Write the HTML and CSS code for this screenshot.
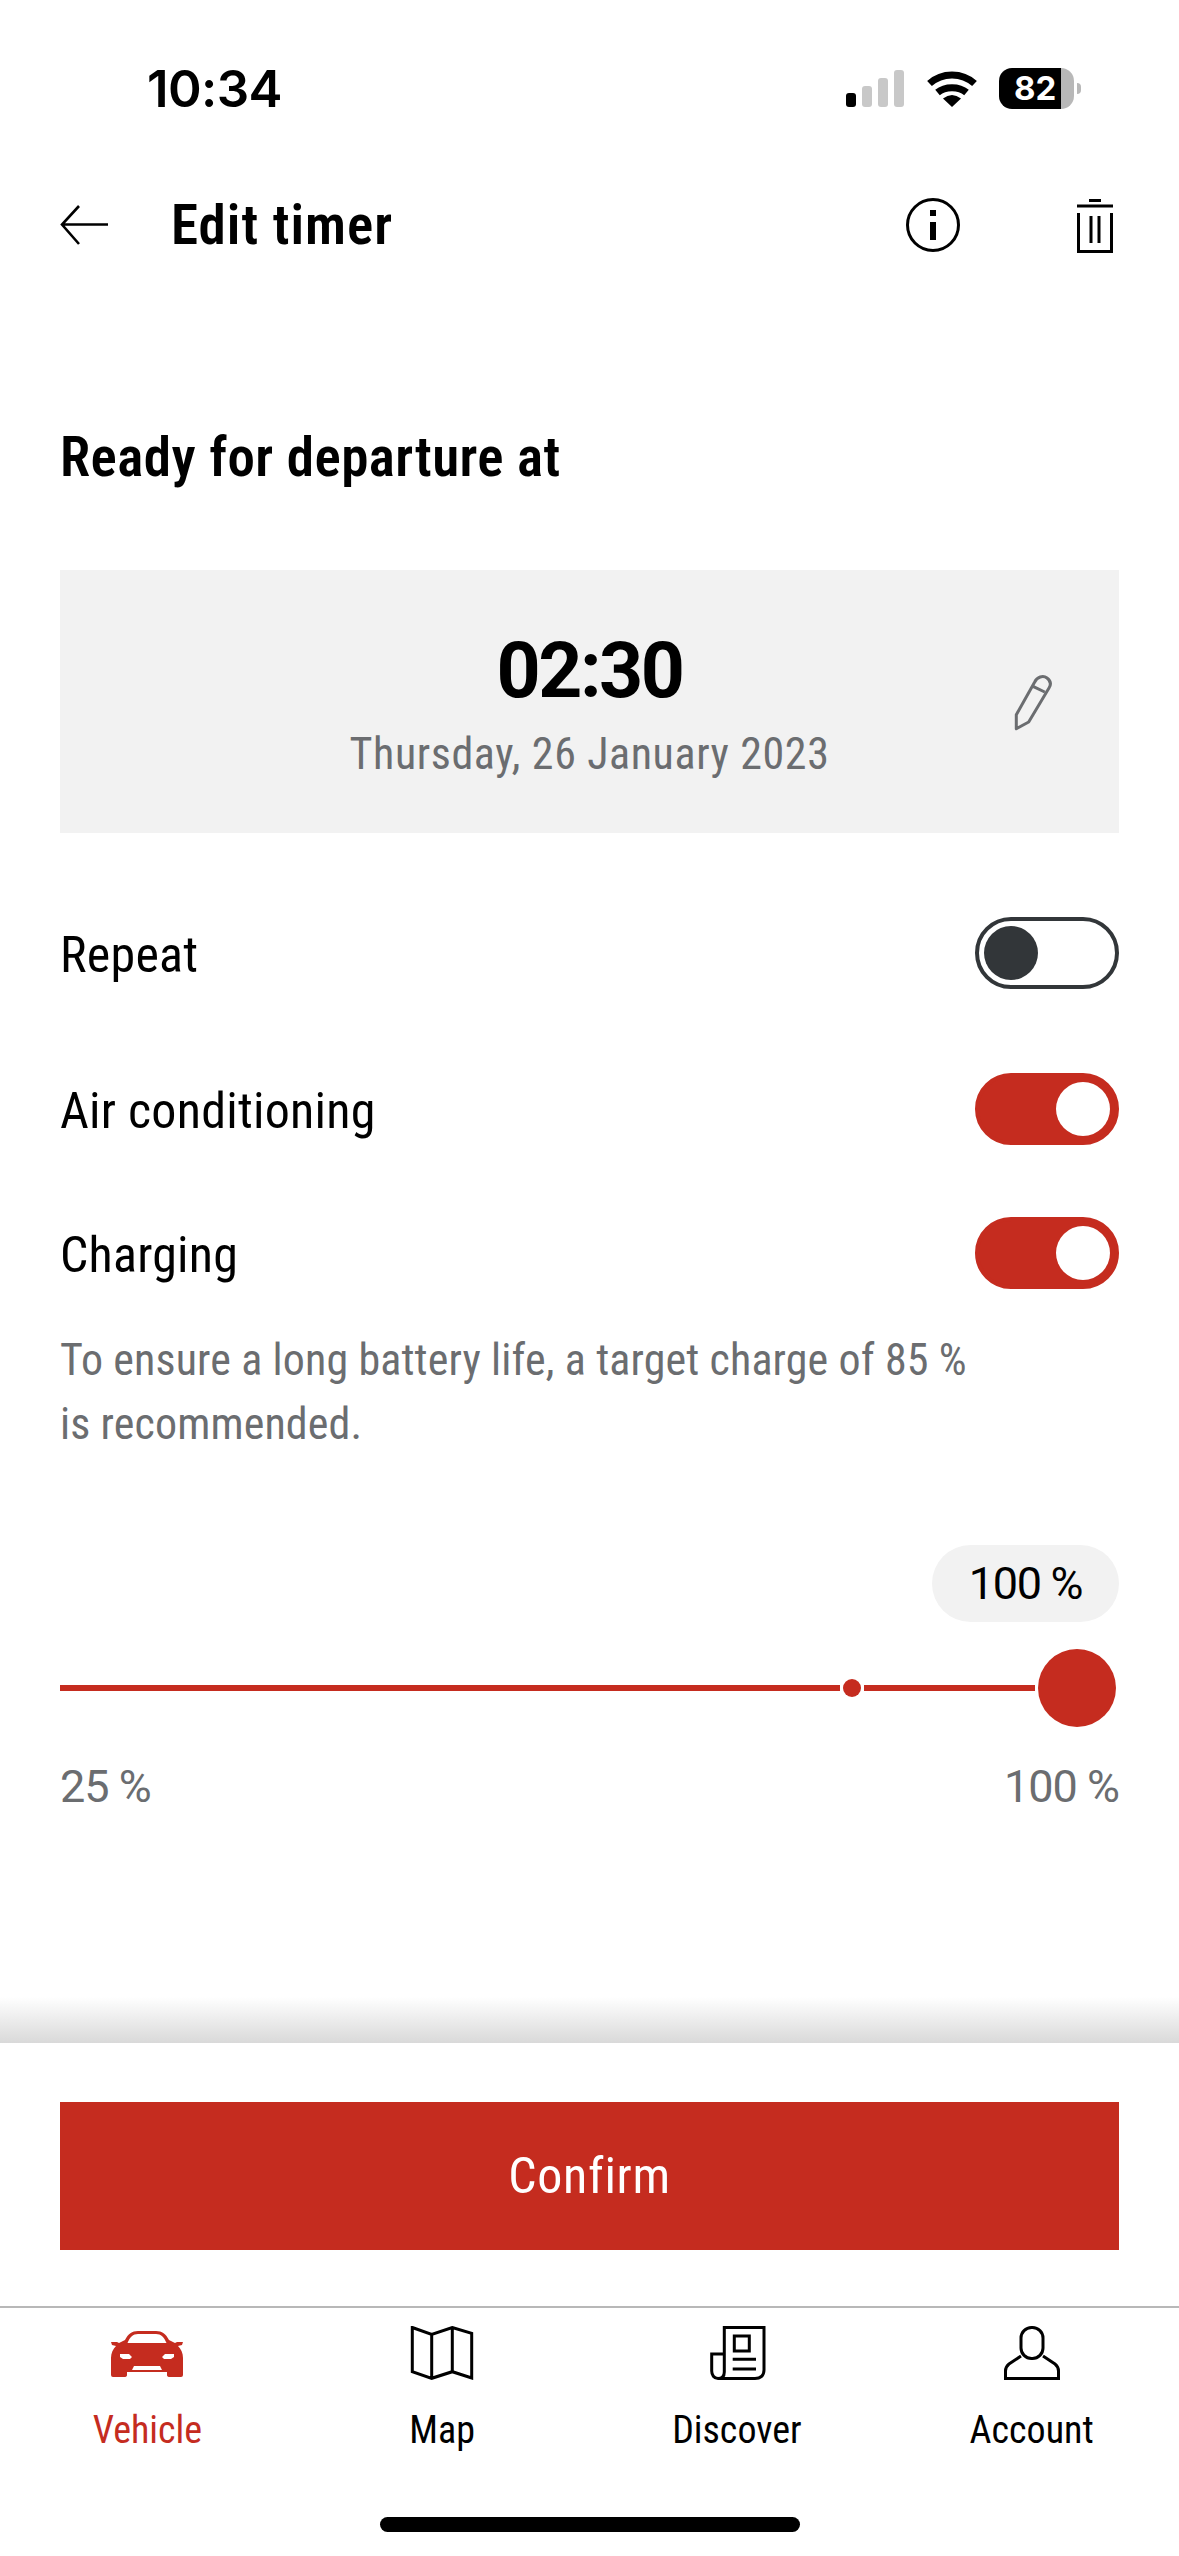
FILE: index.html
```html
<!DOCTYPE html>
<html lang="en">
<head>
  <meta charset="UTF-8">
  <title>Edit timer</title>
  <link rel="stylesheet" href="styles.css">
</head>
<body>
  <div class="phone">
    <div class="status">
      <span class="clock">10:34</span>
      <div class="status-icons">
        <svg class="signal" width="58" height="37" viewBox="0 0 58 37">
          <rect x="0" y="23" width="10" height="14" rx="3" fill="#000"/>
          <rect x="16" y="16" width="10" height="21" rx="3" fill="#c8c8c8"/>
          <rect x="32" y="8" width="10" height="29" rx="3" fill="#c8c8c8"/>
          <rect x="48" y="0" width="10" height="37" rx="3" fill="#c8c8c8"/>
        </svg>
        <svg class="wifi" width="50" height="37" viewBox="0 0 50 37">
          <path d="M2.5 13.5C15 2 35 2 47.5 13.5" fill="none" stroke="#000" stroke-width="7"/>
          <path d="M10.5 22.5C18 16 32 16 39.5 22.5" fill="none" stroke="#000" stroke-width="7"/>
          <path d="M25 37L16 28.5Q25 21.5 34 28.5Z" fill="#000"/>
        </svg>
        <div class="battery"><span>82</span></div>
        <div class="battery-nub"></div>
      </div>
    </div>

    <div class="topbar">
      <svg class="back" width="48" height="40" viewBox="0 0 48 40">
        <path d="M48 19.5H2M19 1L2 19.5L19 39" fill="none" stroke="#000" stroke-width="2.6"/>
      </svg>
      <span class="topbar-title">Edit timer</span>
      <svg class="info" width="54" height="54" viewBox="0 0 54 54">
        <circle cx="27" cy="27" r="25.5" fill="none" stroke="#000" stroke-width="3"/>
        <rect x="24" y="12" width="6" height="6" fill="#000"/>
        <rect x="24" y="24" width="6" height="18" fill="#000"/>
      </svg>
      <svg class="trash" width="36" height="56" viewBox="0 0 36 56">
        <path d="M12 3.5H24M0 9H36M1.5 16V54.500H34.500V16M14 19V46M22 19V46" fill="none" stroke="#000" stroke-width="3"/>
      </svg>
    </div>

    <div class="content">
      <h1 class="heading">Ready for departure at</h1>

      <div class="time-card">
        <div class="time-text">
          <div class="time">02:30</div>
          <div class="date">Thursday, 26 January 2023</div>
        </div>
        <svg class="pencil" width="40" height="58" viewBox="0 0 40 58">
          <path d="M3.300 55.700V41.700L21.700 9C24 4 30 2 34 5C38 8 38.500 11 36 15L15.700 49ZM20 13.300L31.700 19" fill="none" stroke="#6b6d70" stroke-width="3" stroke-linejoin="round"/>
        </svg>
      </div>

      <div class="row row-repeat">
        <span>Repeat</span>
        <div class="toggle"><div class="knob"></div></div>
      </div>
      <div class="row row-air">
        <span>Air conditioning</span>
        <div class="toggle on"><div class="knob"></div></div>
      </div>
      <div class="row row-charging">
        <span>Charging</span>
        <div class="toggle on"><div class="knob"></div></div>
      </div>

      <p class="hint">To ensure a long battery life, a target charge of 85 %<br>is recommended.</p>

      <div class="pill-wrap"><div class="pill">100 %</div></div>

      <div class="slider">
        <div class="track"></div>
        <div class="dot"></div>
        <div class="track track-end"></div>
        <div class="thumb"></div>
      </div>
      <div class="range">
        <span>25 %</span>
        <span>100 %</span>
      </div>
    </div>

    <div class="shade"></div>
    <div class="confirm-bar">
      <button class="confirm">Confirm</button>
    </div>

    <nav class="tabs">
      <div class="tab active">
        <svg width="80" height="54" viewBox="0 0 80 54">
          <path fill="#c52c1f" fill-rule="evenodd" d="M4 16H10L12 17L18 14C21 8 25 5 31 5H49C55 5 59 8 62 14L68 17L70 16H76L75 19L71 20C74 23 76 27 76 32V49Q76 51 74 51H63Q60 51 60 49V46H20V49Q20 51 17 51H6Q4 51 4 49V32C4 27 6 23 9 20L5 19ZM20.500 17C23 11 26 8 31 8H49C54 8 57 11 59.500 17ZM13 28H22L25 31L23 33H16L13 31ZM67 28H58L55 31L57 33H64L67 31ZM27 40H53L55 44H25Z"/>
        </svg>
        <span>Vehicle</span>
      </div>
      <div class="tab">
        <svg width="80" height="54" viewBox="0 0 80 54">
          <path d="M10.300 1.500L29.700 8.300L50.300 1.500L69.700 7.300V52L50.300 45.700L29.700 52.300L10.300 45.700ZM29.700 8.300V52.300M50.300 1.500V45.700" fill="none" stroke="#000" stroke-width="3"/>
        </svg>
        <span>Map</span>
      </div>
      <div class="tab">
        <svg width="80" height="54" viewBox="0 0 80 54">
          <path d="M27.300 46V1.500H67V44C67 50 63 52.500 58 52.500H21C17 52.500 14.700 49 14.700 45V28H27.300M27.300 46C27.300 50 25 52.500 21 52.500" fill="none" stroke="#000" stroke-width="3"/>
          <path d="M37.300 10H52.300V25H37.300ZM35.700 33.300H59M35.700 43H59" fill="none" stroke="#000" stroke-width="3"/>
        </svg>
        <span>Discover</span>
      </div>
      <div class="tab">
        <svg width="80" height="54" viewBox="0 0 80 54">
          <rect x="29" y="1.500" width="22" height="31" rx="10.500" fill="none" stroke="#000" stroke-width="3"/>
          <path d="M29 30L17 38C14.500 40 13.500 42 13.500 45V52.500H66.500V45C66.500 42 65.500 40 63 38L51 30" fill="none" stroke="#000" stroke-width="3"/>
        </svg>
        <span>Account</span>
      </div>
    </nav>

    <div class="home-bar"></div>
  </div>
</body>
</html>
```

FILE: styles.css
```css
* {
  box-sizing: border-box;
}
body {
  margin: 0;
  background: #fff;
  font-family: Roboto, "Liberation Sans", sans-serif;
  font-stretch: 75%;
  color: #000;
}
.phone {
  width: 1179px;
  height: 2556px;
  display: flex;
  flex-direction: column;
  overflow: hidden;
}

/* status bar */
.status {
  height: 176px;
  flex: none;
  display: flex;
  align-items: center;
  justify-content: space-between;
  padding: 0 98px 0 147px;
}
.clock {
  font-family: Inter, sans-serif;
  font-weight: 600;
  font-size: 51px;
  letter-spacing: -0.6px;
}
.status-icons {
  display: flex;
  align-items: center;
}
.wifi {
  margin-left: 23px;
}
.battery {
  width: 75px;
  height: 41px;
  margin-left: 22px;
  border-radius: 13px;
  background: linear-gradient(to right, #000 62px, #b8b8b8 62px);
  color: #fff;
  font-family: Inter, sans-serif;
  font-weight: 700;
  font-size: 33px;
  line-height: 41px;
  padding-left: 15px;
}
.battery-nub {
  width: 4px;
  height: 11px;
  margin-left: 3px;
  border-radius: 0 4px 4px 0;
  background: #b8b8b8;
}

/* top bar */
.topbar {
  height: 98px;
  flex: none;
  display: flex;
  align-items: center;
  padding: 0 66px 0 60px;
}
.topbar-title {
  margin-left: 63px;
  font-size: 55px;
  font-weight: 600;
  letter-spacing: 1px;
  flex: 1;
}
.trash {
  margin-left: 117px;
}

.content {
  flex: 1;
  padding: 0 60px;
}
.heading {
  margin: 153px 0 83px;
  font-size: 55px;
  line-height: 60px;
  font-weight: 600;
  letter-spacing: 0.45px;
}

/* time box */
.time-card {
  height: 263px;
  background: #f2f2f2;
  display: grid;
  grid-template-columns: 1fr auto 1fr;
  align-items: center;
  padding-right: 66px;
}
.time-text {
  grid-column: 2;
  text-align: center;
  margin-top: 12px;
  transform: translateX(33px);
}
.time {
  font-size: 77px;
  line-height: 88px;
  font-weight: 700;
  font-stretch: 100%;
  letter-spacing: -2.5px;
  margin-top: -4px;
  margin-bottom: 8px;
}
.date {
  font-size: 44px;
  line-height: 62px;
  letter-spacing: 0.6px;
  color: #6b6d70;
}
.pencil {
  grid-column: 3;
  justify-self: end;
}

/* rows with toggles */
.row {
  display: flex;
  align-items: center;
  justify-content: space-between;
  font-size: 50px;
  letter-spacing: 0.25px;
}
.row span {
  padding-top: 3px;
}
.row-repeat {
  margin-top: 84px;
}
.row-air {
  margin-top: 84px;
}
.row-charging {
  margin-top: 72px;
}
.toggle {
  width: 144px;
  height: 72px;
  border-radius: 36px;
  border: 4px solid #323639;
  padding: 5px;
  display: flex;
  background: #fff;
}
.knob {
  width: 54px;
  height: 54px;
  border-radius: 50%;
  background: #323639;
}
.toggle.on {
  background: #c52c1f;
  border-color: #c52c1f;
  justify-content: flex-end;
}
.toggle.on .knob {
  background: #fff;
}

.hint {
  margin: 39px 0 0;
  font-size: 44px;
  line-height: 64px;
  letter-spacing: 0.12px;
  color: #6b6d70;
}

/* charge slider */
.pill-wrap {
  margin-top: 89px;
  display: flex;
  justify-content: flex-end;
}
.pill {
  width: 187px;
  height: 77px;
  border-radius: 39px;
  background: #f2f2f2;
  font-size: 45px;
  font-stretch: 100%;
  letter-spacing: -1.3px;
  line-height: 77px;
  text-align: center;
}
.slider {
  margin-top: 27px;
  height: 78px;
  display: flex;
  align-items: center;
  padding-right: 3px;
}
.track {
  height: 6px;
  flex: 1;
  background: #c52c1f;
}
.track-end {
  flex: none;
  width: 171px;
}
.dot {
  width: 18px;
  height: 18px;
  margin: 0 3px;
  border-radius: 50%;
  background: #c52c1f;
}
.thumb {
  width: 78px;
  height: 78px;
  margin-left: 3px;
  border-radius: 50%;
  background: #c52c1f;
}
.range {
  margin-top: 30px;
  display: flex;
  justify-content: space-between;
  font-size: 45px;
  font-stretch: 100%;
  letter-spacing: -1px;
  line-height: 60px;
  color: #6b6d70;
}

/* bottom */
.shade {
  height: 46px;
  flex: none;
  background: linear-gradient(to bottom, rgba(215,215,215,0), #d9d9d9);
}
.confirm-bar {
  flex: none;
  padding: 59px 60px 56px;
}
.confirm {
  display: block;
  width: 100%;
  height: 148px;
  border: none;
  background: #c52c1f;
  color: #fff;
  font-family: inherit;
  font-stretch: 75%;
  font-size: 50px;
  letter-spacing: 0.7px;
}
.tabs {
  flex: none;
  height: 250px;
  border-top: 2px solid #b8b8b8;
  padding-top: 18px;
  display: grid;
  grid-template-columns: repeat(4, 1fr);
  align-items: start;
}
.tab {
  display: flex;
  flex-direction: column;
  align-items: center;
  font-size: 38px;
  line-height: 50px;
}
.tab svg {
  display: block;
  margin-bottom: 25px;
}
.tab.active {
  color: #c52c1f;
}
.home-bar {
  position: absolute;
  left: 380px;
  top: 2517px;
  width: 420px;
  height: 15px;
  border-radius: 8px;
  background: #000;
}
```
